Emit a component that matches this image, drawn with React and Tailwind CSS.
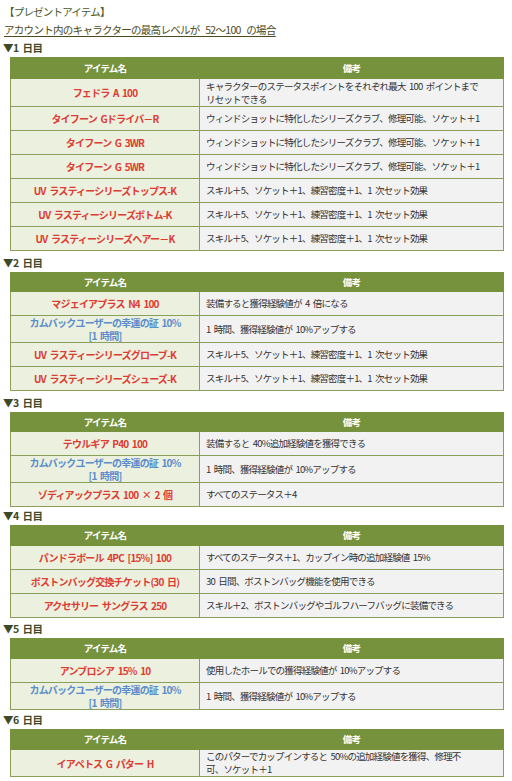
import React from 'react'

const SKILL5 = 'スキル＋5、ソケット＋1、練習密度＋1、1 次セット効果'
const WIND = 'ウィンドショットに特化したシリーズクラブ、修理可能、ソケット＋1'
const comeback = (h) => ({ name: ['カムバックユーザーの幸運の証 10%', '[1 時間]'], blue: true, note: ['1 時間、獲得経験値が 10%アップする'], h })

const days = [
    {
        label: '▼1 日目',
        pt: '',
        head: 'h-[21px]',
        rows: [
            { name: ['フェドラ A 100'], note: ['キャラクターのステータスポイントをそれぞれ最大 100 ポイントまで', 'リセットできる'], h: 'h-[28px]' },
            { name: ['タイフーン Gドライバ－R'], note: [WIND] },
            { name: ['タイフーン G 3WR'], note: [WIND] },
            { name: ['タイフーン G 5WR'], note: [WIND] },
            { name: ['UV ラスティーシリーズトップス-K'], note: [SKILL5] },
            { name: ['UV ラスティーシリーズボトム-K'], note: [SKILL5] },
            { name: ['UV ラスティーシリーズヘアー－K'], note: [SKILL5] },
        ],
    },
    {
        label: '▼2 日目',
        pt: 'pt-[3px]',
        head: 'h-[19px]',
        rows: [
            { name: ['マジェイアプラス N4 100'], note: ['装備すると獲得経験値が 4 倍になる'] },
            comeback('h-[26px]'),
            { name: ['UV ラスティーシリーズグローブ-K'], note: [SKILL5] },
            { name: ['UV ラスティーシリーズシューズ-K'], note: [SKILL5] },
        ],
    },
    {
        label: '▼3 日目',
        pt: 'pt-[3px]',
        head: 'h-[19px]',
        rows: [
            { name: ['テウルギア P40 100'], note: ['装備すると 40%追加経験値を獲得できる'] },
            comeback('h-[26px]'),
            { name: ['ゾディアックプラス 100 × 2 個'], note: ['すべてのステータス＋4'] },
        ],
    },
    {
        label: '▼4 日目',
        pt: '',
        head: 'h-[20px]',
        rows: [
            { name: ['パンドラボール 4PC [15%] 100'], note: ['すべてのステータス＋1、カップイン時の追加経験値 15%'] },
            { name: ['ボストンバッグ交換チケット(30 日)'], note: ['30 日間、ボストンバッグ機能を使用できる'] },
            { name: ['アクセサリー サングラス 250'], note: ['スキル＋2、ボストンバッグやゴルフハーフバッグに装備できる'] },
        ],
    },
    {
        label: '▼5 日目',
        pt: 'pt-[2px]',
        head: 'h-[20px]',
        rows: [
            { name: ['アンブロシア 15% 10'], note: ['使用したホールでの獲得経験値が 10%アップする'] },
            comeback('h-[27px]'),
        ],
    },
    {
        label: '▼6 日目',
        pt: 'pt-[1px]',
        head: 'h-[20px]',
        rows: [
            { name: ['イアペトス G パター H'], note: ['このパターでカップインすると 50%の追加経験値を獲得、修理不', '可、ソケット＋1'], h: 'h-[27px]' },
        ],
    },
]

function Lines({ lines }) {
    return lines.map((l, i) => (
        <div key={i} className="whitespace-pre h-[13px] leading-[13px] overflow-visible">{l}</div>
    ))
}

function DayTable({ rows, head }) {
    return (
        <table className="ml-[10px] w-[493px] table-fixed border-collapse tracking-[-0.8px] [word-spacing:2px]">
            <colgroup>
                <col className="w-[189px]" />
                <col className="w-[304px]" />
            </colgroup>
            <thead>
                <tr className={`${head} bg-[#76923c] text-white font-bold text-[9.5px]`}>
                    <th className="border border-[#76923c] text-center p-0 leading-[13px]">アイテム名</th>
                    <th className="border border-[#76923c] text-center p-0 leading-[13px]">備考</th>
                </tr>
            </thead>
            <tbody>
                {rows.map((r, i) => (
                    <tr key={i} className={r.h || 'h-[24px]'}>
                        <td className={`border border-[#8a9f5c] bg-[#ebf1de] text-center font-bold text-[10px] p-0 ${r.blue ? 'text-[#5b8ccc]' : 'text-[#de3b33]'}`}>
                            <Lines lines={r.name} />
                        </td>
                        <td className="border border-[#8a9f5c] bg-[#f2f2f2] text-[#333333] text-[9.5px] px-[6px] py-0">
                            <Lines lines={r.note} />
                        </td>
                    </tr>
                ))}
            </tbody>
        </table>
    )
}

export default function App() {
    return (
        <div className="w-[512px] min-h-[781px] bg-white pt-[3px] text-[#333333]" style={{ fontFamily: '"Noto Sans CJK JP", "Noto Sans", sans-serif' }}>
            <div className="h-[18px] leading-[18px] pl-[4px] text-[10.5px] tracking-[-0.8px] text-[#4a5a2a]">【プレゼントアイテム】</div>
            <div className="h-[18px] leading-[18px] pl-[4px] text-[10.5px] tracking-[-0.7px] [word-spacing:4px] text-[#4d4a22]">
                <span className="underline underline-offset-2">アカウント内のキャラクターの最高レベルが 52～100 の場合</span>
            </div>
            {days.map((d, i) => (
                <div key={i} className={d.pt}>
                    <div className="h-[18px] leading-[18px] pl-[3px] text-[10.5px] tracking-[-0.5px] [word-spacing:2px] font-bold text-[#3d4a2a]">{d.label}</div>
                    <DayTable rows={d.rows} head={d.head} />
                </div>
            ))}
        </div>
    )
}
